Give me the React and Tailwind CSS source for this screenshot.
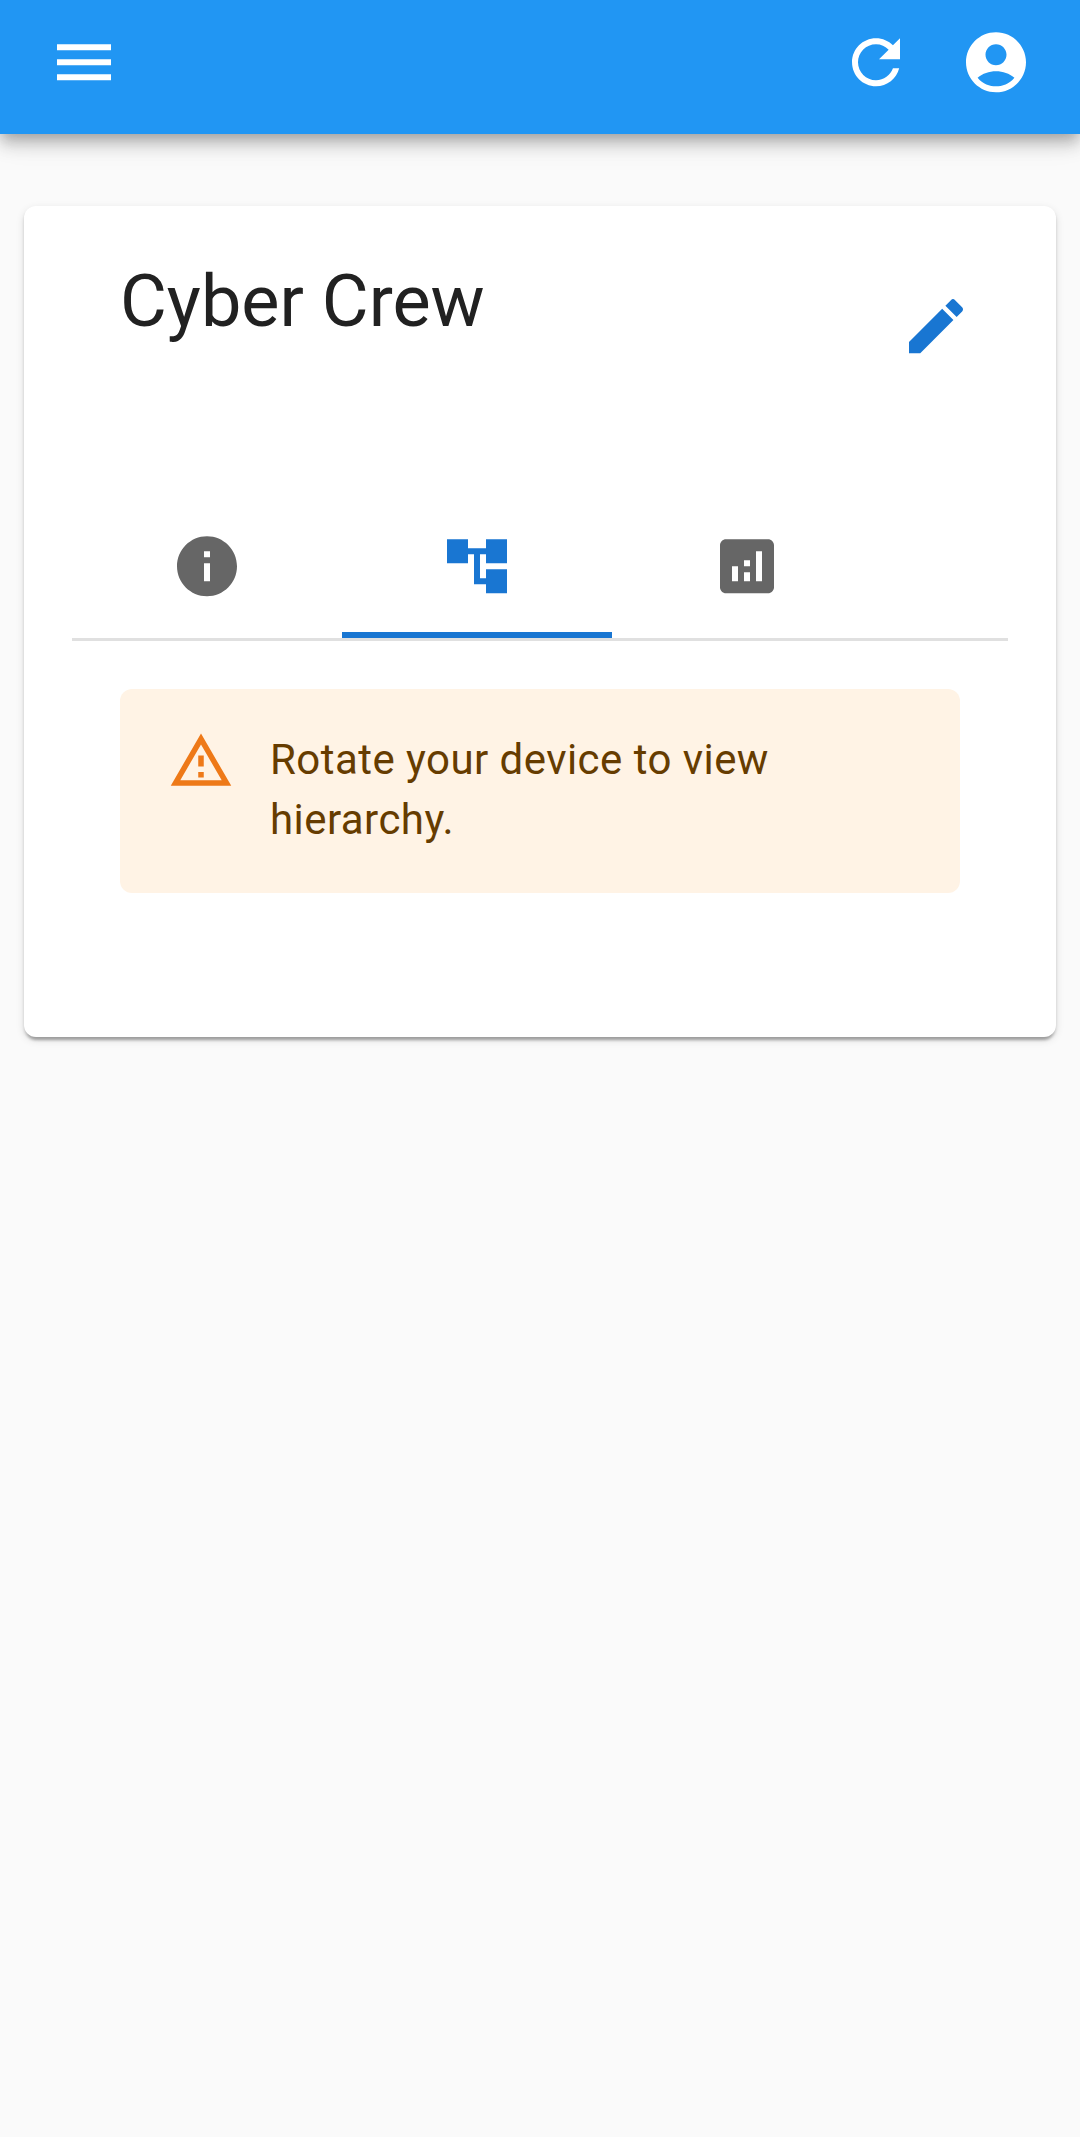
const icons = {
  menu: 'M3 18h18v-2H3v2zm0-5h18v-2H3v2zm0-7v2h18V6H3z',
  refresh:
    'M17.65 6.35C16.2 4.9 14.21 4 12 4c-4.42 0-7.99 3.58-7.99 8s3.57 8 7.99 8c3.73 0 6.84-2.55 7.73-6h-2.08c-.82 2.33-3.04 4-5.65 4-3.31 0-6-2.69-6-6s2.69-6 6-6c1.66 0 3.14.69 4.22 1.78L13 11h7V4l-2.35 2.35z',
  account:
    'M12 2C6.48 2 2 6.48 2 12s4.48 10 10 10 10-4.48 10-10S17.52 2 12 2zm0 4c1.93 0 3.5 1.57 3.5 3.5S13.93 13 12 13s-3.5-1.57-3.5-3.5S10.07 6 12 6zm0 14c-2.03 0-4.43-.82-6.14-2.88C7.55 15.8 9.68 15 12 15s4.45.8 6.14 2.12C16.43 19.18 14.03 20 12 20z',
  edit: 'M3 17.25V21h3.75L17.81 9.94l-3.75-3.75L3 17.25zM20.71 7.04c.39-.39.39-1.02 0-1.41l-2.34-2.34a.9959.9959 0 0 0-1.41 0l-1.83 1.83 3.75 3.75 1.83-1.83z',
  info: 'M12 2C6.48 2 2 6.48 2 12s4.48 10 10 10 10-4.48 10-10S17.52 2 12 2zm1 15h-2v-6h2v6zm0-8h-2V7h2v2z',
  tree: 'M22 11V3h-7v3H9V3H2v8h7V8h2v10h4v3h7v-8h-7v3h-2V8h2v3z',
  analytics:
    'M19 3H5c-1.1 0-2 .9-2 2v14c0 1.1.9 2 2 2h14c1.1 0 2-.9 2-2V5c0-1.1-.9-2-2-2zM9 17H7v-5h2v5zm4 0h-2v-3h2v3zm0-5h-2v-2h2v2zm4 5h-2V7h2v10z',
  warning:
    'M12 5.99L19.53 19H4.47L12 5.99M12 2L1 21h22L12 2zm1 14h-2v2h2v-2zm0-6h-2v4h2v-4z',
};

function Icon({ name, className = 'size-[72px] translate-y-[0.3px]' }) {
  return (
    <svg viewBox="0 0 24 24" fill="currentColor" aria-hidden="true" className={`block shrink-0 ${className}`}>
      <path d={icons[name]} />
    </svg>
  );
}

function Tab({ icon, label, active }) {
  return (
    <button
      role="tab"
      aria-label={label}
      aria-selected={active}
      className={`flex h-36 w-[270px] items-center justify-center ${
        active ? 'text-[#1976d2] shadow-[inset_0_-6px_0_#1976d2]' : 'text-[#666666]'
      }`}
    >
      <Icon name={icon} />
    </button>
  );
}

export default function App() {
  return (
    <div className="min-h-[2137px] bg-[#fafafa] font-['Roboto',sans-serif]">
      <header className="relative z-10 flex h-[134px] items-start bg-[#2196f3] px-12 pt-[26px] text-white shadow-[0_6px_12px_-3px_rgba(0,0,0,0.2),0_12px_15px_0_rgba(0,0,0,0.14),0_3px_30px_0_rgba(0,0,0,0.12)]">
        <button aria-label="Menu">
          <Icon name="menu" />
        </button>
        <div className="ml-auto flex gap-12">
          <button aria-label="Refresh">
            <Icon name="refresh" />
          </button>
          <button aria-label="Account">
            <Icon name="account" />
          </button>
        </div>
      </header>

      <main className="px-6 pt-[72px]">
        <section className="h-[831px] rounded-xl bg-white px-12 pt-12 shadow-[0_6px_3px_-3px_rgba(0,0,0,0.2),0_3px_3px_0_rgba(0,0,0,0.14),0_3px_9px_0_rgba(0,0,0,0.12)]">
          <div className="flex h-60 items-start justify-between pr-9 pl-12">
            <h1 className="text-[72px] leading-[96px] font-normal text-[#212121]">Cyber Crew</h1>
            <button aria-label="Edit" className="mt-9 text-[#1976d2]">
              <Icon name="edit" />
            </button>
          </div>

          <div role="tablist" className="flex border-b-[3px] border-[#e0e0e0]">
            <Tab icon="info" label="Info" active={false} />
            <Tab icon="tree" label="Hierarchy" active={true} />
            <Tab icon="analytics" label="Analytics" active={false} />
          </div>

          <div className="px-12 pt-12">
            <div role="alert" className="flex h-[204px] rounded-xl bg-[#fff3e5] px-12 py-[18px]">
              <div className="mr-9 pt-[21px] text-[#ed6c02] opacity-90">
                <Icon name="warning" className="size-[66px]" />
              </div>
              <p className="pt-[23px] text-[42px] leading-[60px] tracking-[0.01071em] text-[#663c00]">
                Rotate your device to view hierarchy.
              </p>
            </div>
          </div>
        </section>
      </main>
    </div>
  );
}
